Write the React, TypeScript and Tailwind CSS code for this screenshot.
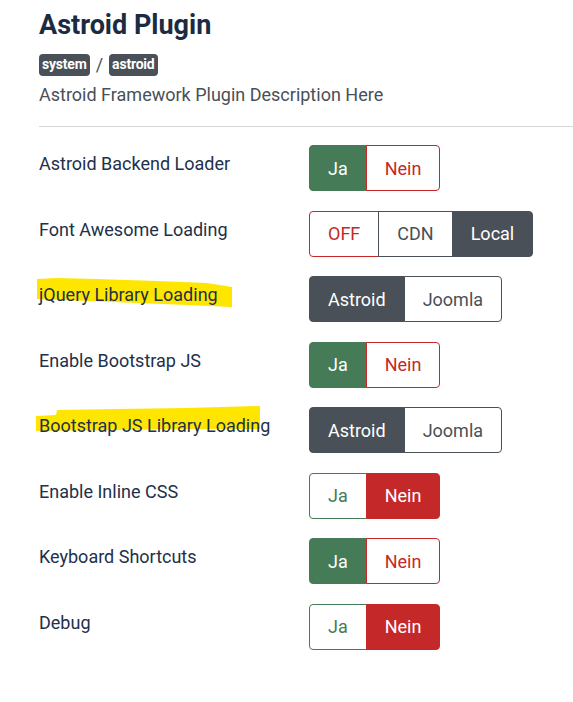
import React from 'react'

type Opt = { label: string; tone: 'green' | 'red' | 'dark' }
type Row = { label: string; options: Opt[]; active: number; mark?: 'jq' | 'bs' }

const yesNo: Opt[] = [
  { label: 'Ja', tone: 'green' },
  { label: 'Nein', tone: 'red' },
]

const srcPick: Opt[] = [
  { label: 'Astroid', tone: 'dark' },
  { label: 'Joomla', tone: 'dark' },
]

const rows: Row[] = [
  { label: 'Astroid Backend Loader', options: yesNo, active: 0 },
  {
    label: 'Font Awesome Loading',
    options: [
      { label: 'OFF', tone: 'red' },
      { label: 'CDN', tone: 'dark' },
      { label: 'Local', tone: 'dark' },
    ],
    active: 2,
  },
  { label: 'jQuery Library Loading', options: srcPick, active: 0, mark: 'jq' },
  { label: 'Enable Bootstrap JS', options: yesNo, active: 0 },
  { label: 'Bootstrap JS Library Loading', options: srcPick, active: 0, mark: 'bs' },
  { label: 'Enable Inline CSS', options: yesNo, active: 1 },
  { label: 'Keyboard Shortcuts', options: yesNo, active: 0 },
  { label: 'Debug', options: yesNo, active: 1 },
]

const activeCls = {
  green: 'bg-[#457b56] border-[#457b56] text-white',
  red: 'bg-[#c52828] border-[#c52828] text-white',
  dark: 'bg-[#495057] border-[#495057] text-white',
}
const idleCls = {
  green: 'bg-white border-[#457b56] text-[#457b56]',
  red: 'bg-white border-[#c52828] text-[#c52828]',
  dark: 'bg-white border-[#495057] text-[#495057]',
}

function Toggle({ options, active }: { options: Opt[]; active: number }) {
  return (
    <div className="flex">
      {options.map((o, i) => {
        const first = i === 0
        const last = i === options.length - 1
        return (
          <div
            key={o.label}
            className={`h-[46px] flex items-center justify-center px-[18px] border text-[18px] ${
              i === active ? activeCls[o.tone] : idleCls[o.tone]
            } ${first ? 'rounded-l-[4px]' : '-ml-px'} ${last ? 'rounded-r-[4px]' : ''}`}
          >
            {o.label}
          </div>
        )
      })}
    </div>
  )
}

// yellow marker strokes drawn over the screenshot
function Marker({ kind }: { kind: 'jq' | 'bs' }) {
  if (kind === 'jq')
    return (
      <svg className="absolute left-[-2px] top-[-4px]" width="200" height="34" viewBox="0 0 200 34">
        <path d="M0 2 L20 1 L60 2 L120 4 L170 6 L195 10 L195 30 L150 28 L100 26 L50 24 L0 22 Z" fill="#ffe600" />
      </svg>
    )
  return (
    <svg className="absolute left-[-3px] top-[-7px]" width="230" height="34" viewBox="0 0 230 34">
      <path d="M0 11 L20 10 L21 5 L80 4 L150 3 L224 1 L224 24 L150 24 L80 25 L0 26 Z" fill="#ffe600" />
    </svg>
  )
}

export default function App() {
  return (
    <div className="bg-white min-h-[702px] pl-[39px] pt-[7px] font-['Roboto',sans-serif]">
      <h1 className="text-[27px] font-bold text-[#1c2b41] leading-[36px]">Astroid Plugin</h1>
      <div className="flex items-center gap-[6px] mt-[8px]">
        <span className="bg-[#495057] text-white text-[14px] font-bold rounded-[4px] px-[3px] h-[22px] flex items-center tracking-[-0.2px]">
          system
        </span>
        <span className="text-[#495057] text-[18px]">/</span>
        <span className="bg-[#495057] text-white text-[14px] font-bold rounded-[4px] px-[3px] h-[22px] flex items-center tracking-[-0.2px]">
          astroid
        </span>
      </div>
      <p className="text-[18px] text-[#495057] mt-[4px] leading-[26px]">Astroid Framework Plugin Description Here</p>
      <div className="border-t border-[#d4d6d8] mt-[18px]" />

      <div className="flex flex-col gap-[19.5px] mt-[18px]">
        {rows.map((r) => (
          <div key={r.label} className="flex">
            <div className="w-[270px] pt-[5px]">
              <span className="relative inline-block text-[18px] leading-[27px] text-[#22304b]">
                {r.mark && <Marker kind={r.mark} />}
                <span className="relative">{r.label}</span>
              </span>
            </div>
            <Toggle options={r.options} active={r.active} />
          </div>
        ))}
      </div>
    </div>
  )
}
